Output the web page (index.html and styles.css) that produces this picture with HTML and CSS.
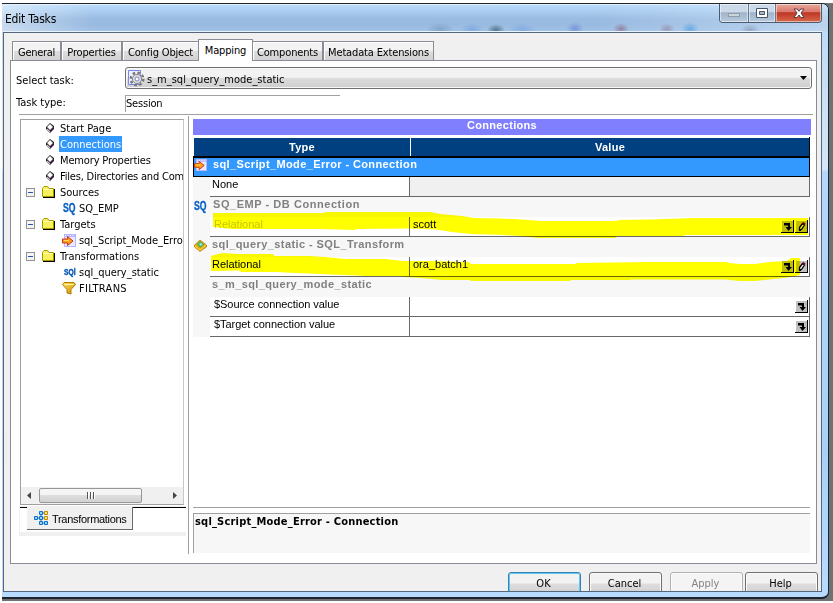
FILE: index.html
```html
<!DOCTYPE html>
<html lang="en">
<head>
    <meta charset="UTF-8">
    <title>Edit Tasks</title>
    <link rel="stylesheet" href="styles.css">
</head>
<body>
    <!-- Shared icons -->
    <svg class="defs">
        <defs>
            <linearGradient id="gold" x1="0" y1="0" x2="1" y2="1">
                <stop offset="0" stop-color="#ffe45a"/>
                <stop offset="1" stop-color="#c88a00"/>
            </linearGradient>
        </defs>
        <symbol id="page" viewBox="0 0 12 12">
            <path d="M2 5 6 1l4 3v3L6 11 2 7z" fill="#222"/>
            <path d="M3 5 6 2l3 3-3 3z" fill="#fff"/>
            <path d="M3 6.500 6 9.300v.9L3 7.400z" fill="#fff"/>
            <path d="M6.500 8.500 9.500 5.500v1.500L6.500 10z" fill="#5a1560"/>
        </symbol>
        <symbol id="folder" viewBox="0 0 13 12">
            <path d="M13 3v9H1v-1.500h10.500V3z" fill="#000"/>
            <path d="M.5 10.500v-8L2 .5h3.500L7 2.500h4.500v8z" fill="#f8f25a" stroke="#a09a00"/>
            <path d="M1.500 3.500h9" stroke="#fffcc0"/>
        </symbol>
        <symbol id="target" viewBox="0 0 14 13">
            <path d="M2 0h12v13H2z" fill="#b9b4ff"/>
            <path d="M3 3h10v9H3z" fill="#e9e9ff"/>
            <path d="M3 1.500h10" stroke="#fff" stroke-dasharray="1 1.500"/>
            <path d="M.5 5h5V2.500L11 7l-5.500 4.500V9h-5z" fill="#ff9d14" stroke="#c9301c"/>
            <path d="M2 6.500h5" stroke="#ffe04a"/>
        </symbol>
        <symbol id="drop" viewBox="0 0 13 13">
            <path d="M0 0h13v13H0z" fill="#000"/>
            <path d="M0 0h12v12H0z" fill="#fff"/>
            <path d="M1 1h11v11H1z" fill="#c0c0c0"/>
            <path d="M3 3h6v4h2L7.500 11 4.500 7H7V5.500H3z" fill="#000"/>
        </symbol>
        <symbol id="pencil" viewBox="0 0 13 13">
            <path d="M0 0h13v13H0z" fill="#000"/>
            <path d="M0 0h12v12H0z" fill="#fff"/>
            <path d="M1 1h11v11H1z" fill="#c0c0c0"/>
            <path d="M4.500 10V7.500l3-4 2 1.500-3 4.500z" fill="#eee" stroke="#000" stroke-width="1.300"/>
            <path d="M4 9h2v2H4z" fill="#000"/>
            <path d="M7 3.500 8.500 2 10.500 3.500 9.300 5.500z" fill="#800020"/>
        </symbol>
    </svg>

    <div class="window">
        <div class="titlebar">
            <span class="caption">Edit Tasks</span>
            <div class="controls">
                <span class="ctl min"><svg width="12" height="5"><path d="M.5.5h11v3H.5z" fill="#cdd5dc" stroke="#8d9aa8"/></svg></span>
                <span class="ctl max"><svg width="12" height="11"><path d="M.5.5h11v9H.5z" fill="#fff" stroke="#46546a"/><path d="M3.500 3.500h5v3h-5z" fill="#a8b7ca" stroke="#46546a"/></svg></span>
                <span class="ctl close"><svg width="12" height="11"><path d="M1 1h3.200L6 3.300 7.800 1H11L8 5l3 4.500H7.800L6 7 4.200 9.500H1L4 5z" fill="#fff" stroke="#5c3a42"/></svg></span>
            </div>
        </div>

        <div class="client">
            <div class="tabs">
                <span class="tab general">General</span>
                <span class="tab properties">Properties</span>
                <span class="tab config">Config Object</span>
                <span class="tab active">Mapping</span>
                <span class="tab components">Components</span>
                <span class="tab metadata">Metadata Extensions</span>
            </div>

            <div class="panel">
                <div class="field">
                    <label>Select task:</label>
                    <div class="combo">
                        <svg width="17" height="17" viewBox="0 0 17 17">
                            <path d="M.5.5h12v14H.5z" fill="#eef0ff" stroke="#7a86e8"/>
                            <circle cx="9" cy="9" r="6.300" fill="none" stroke="#777" stroke-width="2.400" stroke-dasharray="2.500 2.400"/>
                            <circle cx="9" cy="9" r="4.600" fill="#ddd" stroke="#888"/>
                            <circle cx="9" cy="9" r="2" fill="#fff" stroke="#7a86c8"/>
                        </svg>
                        <span class="combo-text">s_m_sql_query_mode_static</span>
                        <svg class="arrow" width="7" height="4"><path d="M0 0h7L3.500 4z"/></svg>
                    </div>
                </div>
                <div class="field task-type">
                    <label>Task type:</label>
                    <div class="readonly">Session</div>
                </div>

                <div class="split">
                    <div class="left">
                        <div class="tree">
                            <div class="node leaf"><svg width="12" height="12"><use href="#page"/></svg><span>Start Page</span></div>
                            <div class="node leaf selected"><svg width="12" height="12"><use href="#page"/></svg><span>Connections</span></div>
                            <div class="node leaf"><svg width="12" height="12"><use href="#page"/></svg><span class="memory">Memory Properties</span></div>
                            <div class="node leaf"><svg width="12" height="12"><use href="#page"/></svg><span class="files">Files, Directories and Com</span></div>
                            <div class="node"><i class="toggle"></i><svg width="13" height="12"><use href="#folder"/></svg><span>Sources</span></div>
                            <div class="node child"><b class="sq">SQ</b><span>SQ_EMP</span></div>
                            <div class="node"><i class="toggle"></i><svg width="13" height="12"><use href="#folder"/></svg><span>Targets</span></div>
                            <div class="node child"><svg width="14" height="13"><use href="#target"/></svg><span class="script">sql_Script_Mode_Erro</span></div>
                            <div class="node"><i class="toggle"></i><svg width="13" height="12"><use href="#folder"/></svg><span>Transformations</span></div>
                            <div class="node child"><b class="sql">SQl</b><span>sql_query_static</span></div>
                            <div class="node child"><svg width="14" height="13"><path d="M.5 2.500 2 .5h10l1.500 2-4.500 5V12L5 11V7.500z" fill="url(#gold)" stroke="#b57a00"/><path d="M2.500 2.500h9" stroke="#fff3a0"/></svg><span class="filter">FILTRANS</span></div>
                            <div class="scrollbar">
                                <svg width="4" height="7"><path d="M4 0v7L0 3.500z" fill="#444"/></svg>
                                <div class="thumb"><i></i><i></i><i></i></div>
                                <svg width="4" height="7"><path d="M0 0v7l4-3.500z" fill="#444"/></svg>
                            </div>
                        </div>
                        <div class="tree-tabs">
                            <div class="tree-tab">
                                <svg width="15" height="14" viewBox="0 0 15 14">
                                    <path d="M3 7h4M7 2v10M7 2h5M7 7h5M7 12h5" stroke="#1a6fc0"/>
                                    <path d="M.5 5.500h3v3h-3zM5.500.5h3v3h-3zM5.500 5.500h3v3h-3zM5.500 10.500h3v3h-3zM10.500 10.500h3v3h-3z" fill="#8fd6ff" stroke="#1070c8"/>
                                    <path d="M10.500.5h3v3h-3zM10.500 5.500h3v3h-3z" fill="#ffe680" stroke="#c08a00"/>
                                </svg>
                                <span>Transformations</span>
                            </div>
                        </div>
                    </div>

                    <div class="right">
                        <div class="grid-title">Connections</div>
                        <div class="grid">
                            <div class="row head"><span class="type-head">Type</span><span class="value-head">Value</span></div>
                            <div class="row group current"><span class="icon"><svg width="13" height="12"><use href="#target"/></svg></span><span class="name">sql_Script_Mode_Error - Connection</span></div>
                            <div class="row"><span class="icon"></span><span class="type">None</span><span class="value disabled"></span></div>
                            <div class="row group"><span class="icon"><b class="sq">SQ</b></span><span class="name db">SQ_EMP - DB Connection</span></div>
                            <div class="row"><span class="icon"></span><span class="type muted">Relational</span><span class="value">scott<svg class="push" width="13" height="13"><use href="#drop"/></svg><svg width="13" height="13"><use href="#pencil"/></svg></span></div>
                            <div class="row group"><span class="icon"><svg width="13" height="13"><path d="M.5 6 6 1l6.500 5v2L6 12.500.5 8z" fill="#e8a812" stroke="#a86d00" stroke-width=".6"/><path d="M3 5 6 2l4.500 3.500L6 9z" fill="#4fb548"/><path d="M5 4.500 7.500 4l1 2-2.500 1z" fill="#8fe2ff"/><path d="m1 7 5 4 6-5" fill="none" stroke="#ffe04a"/></svg></span><span class="name transform">sql_query_static - SQL_Transform</span></div>
                            <div class="row"><span class="icon"></span><span class="type">Relational</span><span class="value">ora_batch1<svg class="push" width="13" height="13"><use href="#drop"/></svg><svg width="13" height="13"><use href="#pencil"/></svg></span></div>
                            <div class="row group"><span class="icon"></span><span class="name">s_m_sql_query_mode_static</span></div>
                            <div class="row"><span class="icon"></span><span class="type indent">$Source connection value</span><span class="value"><svg class="push" width="13" height="13"><use href="#drop"/></svg></span></div>
                            <div class="row"><span class="icon"></span><span class="type indent">$Target connection value</span><span class="value"><svg class="push" width="13" height="13"><use href="#drop"/></svg></span></div>

                            <!-- Marker strokes over the two connection rows -->
                            <svg class="marker" width="618" height="200" viewBox="193 137 618 200">
                                <path d="M213 213 324 213 325 212 430 212 440 214 462 216 474 218 500 218.500 522 219.500 541 221 617 221 618 220 650 219.500 694 218 808 218 808 235 685 235 684 236 617 236 615 238 538 238 521 236 503 235 471 234 452 232 436 229.500 409 228.500 356 229 355 230 320 229 232 229 213 227z"/>
                                <path d="M211 256 222 253 238 254 273 254 274 256 310 256 325 257 345 259 385 259 403 261 430 261 469 262 471 264 575 264 577 263 648 262 727 262 729 263 740 264 755 264 770 262 787 261 791 258 800 258 800 275 791 277 774 279 755 281 739 281 726 279.500 631 279.500 630 280 571 280 570 281 471 281 470 280 443 280 421 278 405 277 400 276 367 276 320 274 295 273 277 272 241 272 240 270.500 211 271z"/>
                            </svg>
                        </div>
                        <div class="description">sql_Script_Mode_Error - Connection</div>
                    </div>
                </div>
            </div>

            <div class="buttons">
                <span class="btn default">OK</span>
                <span class="btn">Cancel</span>
                <span class="btn off">Apply</span>
                <span class="btn help">Help</span>
            </div>
        </div>
    </div>
</body>
</html>
```

FILE: styles.css
```css
* {
    box-sizing: border-box;
}
body {
    margin: 0;
    width: 833px;
    height: 603px;
    overflow: hidden;
    padding: 3px 0 2px 2px;
    background: linear-gradient(#fff, #fff) left / 2px 100% no-repeat, linear-gradient(#fff 3px, #6e7275 3px, #6e7275 601px, #fff 601px);
    font-family: "DejaVu Sans Condensed", "DejaVu Sans", sans-serif;
    font-stretch: condensed;
    font-size: 11px;
    color: #000;
    white-space: nowrap;
}
svg {
    display: block;
    flex: none;
}
.defs {
    position: absolute;
    width: 0;
    height: 0;
}
.window {
    width: 827px;
    height: 596px;
    border: solid #20242c;
    border-width: 1px 1px 2px 0;
    border-radius: 0 7px 7px 0;
    padding: 0 6px 5px 1px;
    background: linear-gradient(#b5d9fc, #c5def5 60px, #d5e7f8 165px, #b4d8fb 168px, #a9d1f7 450px, #b8dcff);
}
.titlebar {
    display: flex;
    justify-content: space-between;
    height: 28px;
    margin: 0 -6px 0 -1px;
    padding: 0 6px 0 3px;
    border-top: 1px solid #e4f1fd;
    border-radius: 0 6px 0 0;
    background:
        radial-gradient(14px 8px at 438px 25px, rgba(90,125,165,.4), transparent),
        radial-gradient(12px 7px at 470px 25px, rgba(90,140,220,.4), transparent),
        radial-gradient(9px 6px at 494px 25px, rgba(35,65,80,.6), transparent),
        radial-gradient(14px 7px at 520px 25px, rgba(90,140,220,.4), transparent),
        radial-gradient(9px 7px at 573px 24px, rgba(80,110,210,.5), transparent),
        radial-gradient(8px 6px at 619px 24px, rgba(130,70,90,.5), transparent),
        radial-gradient(8px 6px at 665px 24px, rgba(130,90,110,.4), transparent),
        radial-gradient(9px 7px at 688px 24px, rgba(60,150,220,.6), transparent),
        radial-gradient(10px 6px at 748px 25px, rgba(90,100,120,.35), transparent),
        linear-gradient(90deg, rgba(255,255,255,.45), transparent 90px, transparent 600px, rgba(215,232,250,.55)),
        linear-gradient(#b8dafb, #9abbe1 14px, #9abbe1 20px, #a3c3e6);
}
.caption {
    padding-top: 6px;
    font-size: 12px;
    line-height: 16px;
    letter-spacing: -.2px;
}
.controls {
    display: flex;
    height: 19px;
    margin-top: -1px;
    border: 1px solid #4b5a6c;
    border-top: none;
    border-radius: 0 0 4px 4px;
    overflow: hidden;
}
.ctl {
    display: flex;
    align-items: center;
    justify-content: center;
    width: 28px;
    border-left: 1px solid #66788c;
    box-shadow: inset 0 0 0 1px rgba(255,255,255,.5);
    background: linear-gradient(#cbd9e9 45%, #9eb2c9 48%, #b8cbe0);
}
.min {
    border-left: none;
}
.min svg {
    margin-top: 5px;
}
.max {
    width: 27px;
}
.close {
    width: 46px;
    background: linear-gradient(#e9a99c, #d9766a 45%, #bd3525 48%, #d8694a);
}
.client {
    height: 560px;
    border: 1px solid #56677b;
    background: #f0f0f0;
    box-shadow: 0 -1px #e8f3fd;
    overflow: hidden;
}
.tabs {
    display: flex;
    align-items: flex-end;
    height: 27px;
    padding-left: 8px;
}
.tab {
    height: 19px;
    border: 1px solid #898c95;
    border-bottom: none;
    box-shadow: inset 1px 1px #fff;
    background: linear-gradient(#f3f3f3 50%, #dedede 50%, #d2d2d2);
    line-height: 21px;
    text-align: center;
    letter-spacing: -.15px;
}
.general {
    width: 49px;
    letter-spacing: -.3px;
}
.properties { width: 61px; }
.config { width: 77px; }
.components { width: 71px; margin-left: -1px; }
.metadata { width: 111px; }
.active {
    width: 55px;
    height: 22px;
    margin: 0 0 -1px -1px;
    background: #fff;
    line-height: 21px;
    z-index: 1;
}
.panel {
    width: 807px;
    height: 504px;
    margin-left: 6px;
    padding: 6px 3px 0 5px;
    border: 1px solid #898c95;
    background: #fff;
}
.field {
    display: flex;
    height: 22px;
    padding-right: 1px;
}
.field label {
    width: 109px;
    line-height: 27px;
}
.combo {
    display: flex;
    align-items: center;
    width: 687px;
    height: 22px;
    padding: 0 4px 0 2px;
    border: 1px solid #707070;
    border-radius: 3px;
    box-shadow: inset 0 0 0 1px #f8f8f8;
    background: linear-gradient(#f2f2f2 47%, #dcdcdc 50%, #cfcfcf);
}
.combo-text {
    margin-left: 2px;
    padding-top: 2px;
}
.arrow {
    margin-left: auto;
}
.task-type {
    height: 17px;
    margin-top: 6px;
}
.field.task-type label {
    line-height: 15px;
}
.readonly {
    width: 215px;
    border: solid #a0a0a0;
    border-width: 1px 0 0 1px;
    line-height: 15px;
    letter-spacing: -.2px;
}
.split {
    display: flex;
    width: 794px;
    height: 440px;
    margin: 2px 0 0 3px;
    border-top: 1px solid #a0a0a0;
}
.left {
    width: 170px;
    height: 438px;
    margin-top: 1px;
    padding-top: 3px;
    border-right: 1px solid #a0a0a0;
}
.tree {
    display: flex;
    flex-direction: column;
    width: 164px;
    height: 386px;
    margin-left: 1px;
    border: 1px solid #a0a0a0;
    border-right-color: #c8c8c8;
    overflow: hidden;
}
.node {
    display: flex;
    flex: none;
    align-items: center;
    height: 16px;
    padding-left: 5px;
}
.node svg {
    margin-right: 4px;
}
.node span {
    height: 16px;
    padding: 0 1px;
    line-height: 17px;
}
.leaf {
    padding-left: 23px;
}
.leaf svg {
    margin-right: 3px;
}
.node .memory {
    letter-spacing: -.15px;
}
.node .files {
    padding-right: 0;
    letter-spacing: -.2px;
}
.selected span {
    background: #39f;
    color: #fff;
}
.toggle {
    width: 9px;
    height: 9px;
    margin-right: 7px;
    border: 1px solid #919191;
    background: linear-gradient(#2e54a0, #2e54a0) center / 5px 1px no-repeat, #f4f4f4;
}
.child {
    padding-left: 41px;
}
.child svg {
    margin-right: 2px;
}
.node .script {
    padding-right: 0;
    letter-spacing: -.05px;
}
.node .filter {
    letter-spacing: .3px;
}
.sq, .sql {
    width: 12px;
    color: #0b62c4;
    font: bold 12px "Liberation Sans", sans-serif;
    transform: scaleX(.72);
    transform-origin: left;
    -webkit-text-stroke: .4px #0b62c4;
}
.child .sq {
    margin: 0 3px 0 1px;
}
.icon .sq {
    display: block;
    line-height: 15px;
}
.sql {
    margin: 0 2px;
    color: #00479e;
    font-size: 9px;
    transform: scaleX(.75);
}
.scrollbar {
    display: flex;
    align-items: center;
    height: 17px;
    margin-top: auto;
    padding: 0 6px;
    background: #f0f0f0;
}
.thumb {
    display: flex;
    align-items: center;
    justify-content: center;
    gap: 1px;
    width: 103px;
    height: 15px;
    margin: 0 auto 0 8px;
    border: 1px solid #979797;
    border-radius: 2px;
    background: linear-gradient(#f5f5f5 50%, #dedede 50%, #d2d2d2);
}
.thumb i {
    width: 2px;
    height: 7px;
    background: linear-gradient(90deg, #555 50%, #fff 50%);
}
.tree-tabs {
    width: 167px;
    height: 30px;
    margin-top: 1px;
    padding-left: 9px;
    border: solid #f0f0f0;
    border-width: 1px 0 4px 1px;
    box-shadow: inset 0 1px #000;
}
.tree-tab {
    display: flex;
    align-items: center;
    gap: 3px;
    width: 106px;
    height: 23px;
    margin-left: -2px;
    padding-left: 7px;
    border: solid #696969;
    border-width: 0 1px 1px 0;
    background: #f0f0f0;
    font-family: "Liberation Sans", sans-serif;
    letter-spacing: -.3px;
}
.tree-tab span {
    padding-top: 1px;
}
.right {
    width: 618px;
    margin: 4px 0 0 4px;
}
.grid-title {
    height: 16px;
    background: #8080ff;
    color: #fff;
    font: bold 11px/13px "Liberation Sans", sans-serif;
    letter-spacing: .3px;
    text-align: center;
}
.grid {
    position: relative;
    width: 617px;
    height: 373px;
    padding-top: 2px;
    border-bottom: 1px solid #a0a0a0;
    font-family: "Liberation Sans", sans-serif;
}
.row {
    display: flex;
    height: 20px;
}
.head {
    height: 20px;
    border: solid #000;
    border-width: 0 1px 1px 0;
    padding: 1px 0 0 1px;
    color: #fff;
    font-weight: bold;
    letter-spacing: .3px;
    line-height: 18px;
    text-align: center;
}
.type-head {
    width: 216px;
    margin-right: 1px;
    background: #004080;
}
.value-head {
    flex: 1;
    background: #004080;
}
.icon {
    width: 17px;
    padding: 2px 0 0 1px;
    background: #f7f7f7;
}
.group {
    background: #f7f7f7;
    color: #808080;
    font-weight: bold;
    line-height: 15px;
}
.name {
    padding-left: 2px;
    letter-spacing: .38px;
}
.row .db {
    padding-left: 3px;
    letter-spacing: .55px;
}
.transform {
    letter-spacing: .42px;
}
.current {
    border: 1px solid #000;
    background: #39f;
    color: #fff;
    line-height: 13px;
}
.current .icon {
    padding: 1px 0 0;
    background: none;
}
.type, .value {
    height: 20px;
    border-bottom: 1px solid #696969;
    line-height: 15px;
}
.row .type {
    width: 200px;
    padding-left: 2px;
    border-right: 1px solid #696969;
}
.row .muted {
    padding-left: 4px;
    color: #c8c8c8;
}
.row .indent {
    padding-left: 4px;
    letter-spacing: -.05px;
}
.value {
    display: flex;
    gap: 1px;
    width: 400px;
    padding: 0 1px 0 3px;
    border-right: 1px solid #696969;
}
.value svg {
    margin-top: 3px;
}
.push {
    margin-left: auto;
}
.disabled {
    background: #f0f0f0;
}
.marker {
    position: absolute;
    top: 2px;
    left: 0;
    mix-blend-mode: multiply;
    fill: #ff0;
}
.description {
    width: 617px;
    height: 40px;
    margin-top: 5px;
    padding-left: 1px;
    border: solid #a0a0a0;
    border-width: 1px 0 0 1px;
    background: #f7f7f7;
    font-weight: bold;
    line-height: 15px;
    letter-spacing: .2px;
}
.buttons {
    display: flex;
    gap: 8px;
    margin: 8px 0 0 504px;
}
.btn {
    width: 73px;
    height: 24px;
    padding-right: 2px;
    border: 1px solid #707070;
    border-radius: 3px;
    box-shadow: inset 0 0 0 1px #fbfbfb;
    background: linear-gradient(#f2f2f2 10px, #dddddd 11px, #cfcfcf);
    line-height: 22px;
    text-align: center;
}
.default {
    border-color: #3c7fb1;
    box-shadow: inset 0 0 0 1px #5cc9f0;
}
.off {
    border-color: #adb2b5;
    background: #f4f4f4;
    color: #838383;
}
.help {
    margin-left: -6px;
}
```
